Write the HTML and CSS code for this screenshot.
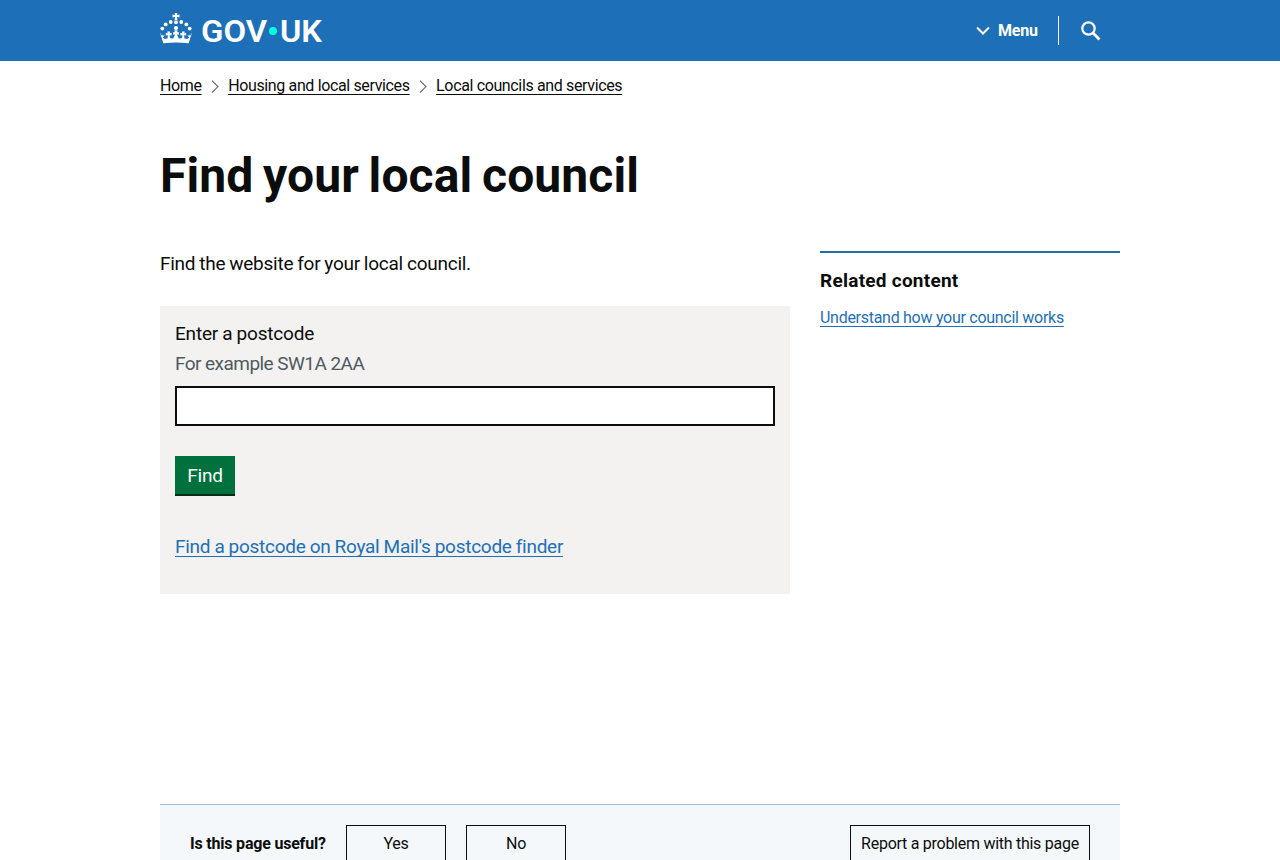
FILE: index.html
```html
<!DOCTYPE html>
<html lang="en">
<head>
    <meta charset="utf-8">
    <title>Find your local council - GOV.UK</title>
    <link rel="stylesheet" href="styles.css">
</head>
<body>
    <header class="header">
        <div class="container header-inner">
            <a class="logo" href="#" aria-label="GOV.UK">
                <svg width="170" height="44" viewBox="0 0 170 44">
                    <g fill="#fff">
                        <!-- crown -->
                        <path d="M14.700 1h2.600l-.4 2 2.600-.4v2.800l-2.600-.4.6 3.600h-3l.6-3.600-2.600.4V2.600l2.600.4z"/>
                        <circle cx="16" cy="10.300" r="1.900"/>
                        <circle cx="16" cy="16" r="2.100"/>
                        <circle cx="10.700" cy="10" r="1.900"/>
                        <circle cx="21.300" cy="10" r="1.900"/>
                        <circle cx="5.700" cy="12.400" r="1.900"/>
                        <circle cx="26.300" cy="12.400" r="1.900"/>
                        <circle cx="2.300" cy="16.600" r="1.900"/>
                        <circle cx="29.700" cy="16.600" r="1.900"/>
                        <path d="M3.300 31.300 0 20.500l1.600 2.800 3 .2-1.700 2L4.800 27l2.600-.6.6-3.200-2.200.4v-2.800l1.900.4-.4-1.800h2.800l-.5 1.800 2-.4v2.800l-2.200-.4.8 3 3 .2 1.900-4-1.900.3v-2.800l1.600.3-.4-2h3.200l-.4 2 1.600-.3v2.800l-1.900-.3 1.900 4 3-.2.8-3-2.200.4v-2.800l2 .4-.5-1.800h2.800l-.4 1.800 1.900-.4v2.800l-2.200-.4.6 3.200 2.600.6 1.900-1.500-1.700-2 3-.2L32 20.500l-3.300 10.800Q16 29.600 3.300 31.300z"/>
                    </g>
                    <text class="logo-text" x="41" y="30" textLength="66" lengthAdjust="spacingAndGlyphs">GOV</text>
                    <circle cx="113" cy="19" r="4" fill="#00ffe0"/>
                    <text class="logo-text" x="120" y="30" textLength="42" lengthAdjust="spacingAndGlyphs">UK</text>
                </svg>
            </a>
            <nav class="header-nav">
                <button class="menu-button" type="button">
                    <svg width="14" height="9" viewBox="0 0 14 9"><path d="M1 1.500l6 6 6-6" fill="none" stroke="#fff" stroke-width="2"/></svg>
                    <span>Menu</span>
                </button>
                <button class="search-button" type="button" aria-label="Search">
                    <svg width="20" height="20" viewBox="0 0 20 20" fill="none" stroke="#fff"><circle cx="7.500" cy="7.500" r="6.200" stroke-width="2.200"/><path d="M12 12l6.500 6.500" stroke-width="2.800"/></svg>
                </button>
            </nav>
        </div>
    </header>

    <div class="container">
        <ol class="breadcrumbs">
            <li><a href="#">Home</a></li>
            <li><a href="#">Housing and local services</a></li>
            <li><a href="#">Local councils and services</a></li>
        </ol>

        <h1 class="title">Find your local council</h1>

        <div class="columns">
            <main class="main">
                <p class="lead">Find the website for your local council.</p>
                <form class="postcode">
                    <label class="label" for="postcode">Enter a postcode</label>
                    <div class="hint">For example SW1A 2AA</div>
                    <input class="input" id="postcode" name="postcode" type="text">
                    <button class="find-button" type="button">Find</button>
                    <p class="finder"><a href="#">Find a postcode on Royal Mail's postcode finder</a></p>
                </form>
            </main>
            <aside class="related">
                <h2 class="related-title">Related content</h2>
                <a class="related-link" href="#">Understand how your council works</a>
            </aside>
        </div>

        <div class="feedback">
            <h2 class="feedback-title">Is this page useful?</h2>
            <button class="feedback-button" type="button">Yes</button>
            <button class="feedback-button" type="button">No</button>
            <button class="feedback-button report" type="button">Report a problem with this page</button>
        </div>
    </div>
</body>
</html>
```
FILE: styles.css
```css
* {
    box-sizing: border-box;
}
body {
    margin: 0;
    height: 860px;
    overflow: hidden;
    background: #fff;
    color: #0b0c0c;
    font-family: Roboto, "Liberation Sans", sans-serif;
    font-size: 19px;
    line-height: 25px;
}
button {
    font-family: inherit;
    padding: 0;
}
a {
    color: #1d70b8;
    text-decoration: underline;
    text-decoration-thickness: 1px;
    text-underline-offset: 3px;
    text-decoration-skip-ink: none;
}
.container {
    width: 960px;
    margin: 0 auto;
}
.header {
    height: 61px;
    background: #1d70b8;
}
.header-inner {
    display: flex;
    justify-content: space-between;
}
.logo {
    height: 44px;
    margin-top: 12px;
}
.logo svg {
    display: block;
}
.logo-text {
    fill: #fff;
    font-size: 31px;
    font-weight: 600;
}
.header-nav {
    display: flex;
    align-items: center;
    height: 29px;
    margin-top: 16px;
}
.menu-button {
    display: flex;
    align-items: center;
    gap: 8px;
    width: 83px;
    height: 29px;
    border: 0;
    border-right: 1px solid #fff;
    background: none;
    color: #fff;
    font-size: 16px;
    font-weight: 700;
    letter-spacing: -0.2px;
}
.search-button {
    display: flex;
    align-items: center;
    width: 61px;
    height: 29px;
    padding: 1px 0 0 22px;
    border: 0;
    background: none;
}
.breadcrumbs {
    display: flex;
    margin: 15px 0 0;
    padding: 0;
    list-style: none;
    font-size: 16px;
    line-height: 20px;
    letter-spacing: -0.36px;
}
.breadcrumbs li {
    display: flex;
    align-items: center;
}
.breadcrumbs li + li::before {
    content: "";
    width: 7.5px;
    height: 7.5px;
    margin: 0 12px 0 6px;
    border: solid #505a5f;
    border-width: 1px 1px 0 0;
    transform: rotate(45deg);
}
.breadcrumbs a {
    color: #0b0c0c;
}
.title {
    margin: 55px 0 0;
    font-size: 48px;
    line-height: 50px;
    font-weight: 700;
    letter-spacing: 0.1px;
    word-spacing: -2.3px;
}
.columns {
    display: flex;
    justify-content: space-between;
    height: 603px;
    padding-top: 50px;
}
.main {
    width: 630px;
}
.lead {
    margin: 0 0 30px;
    letter-spacing: -0.25px;
    word-spacing: -0.5px;
}
.postcode {
    height: 288px;
    padding: 15px;
    background: #f3f2f1;
}
.label {
    display: block;
    margin-bottom: 5px;
    letter-spacing: -0.2px;
    word-spacing: -0.3px;
}
.hint {
    margin-bottom: 10px;
    color: #505a5f;
    letter-spacing: -0.55px;
}
.input {
    display: block;
    width: 100%;
    height: 40px;
    border: 2px solid #0b0c0c;
    border-radius: 0;
    background: #fff;
}
.find-button {
    display: block;
    width: 60px;
    height: 40px;
    margin-top: 30px;
    border: 0;
    border-bottom: 2px solid #002d18;
    background: #00703c;
    color: #fff;
    font-size: 19px;
    letter-spacing: -0.25px;
}
.finder {
    margin: 38px 0 0;
    letter-spacing: -0.27px;
    word-spacing: -0.3px;
}
.related {
    width: 300px;
    height: 80px;
    border-top: 2px solid #23709f;
}
.related-title {
    margin: 15px 0 15px;
    font-size: 19px;
    line-height: 25px;
    letter-spacing: 0.25px;
}
.related-link {
    display: block;
    width: fit-content;
    font-size: 16px;
    line-height: 20px;
    letter-spacing: -0.28px;
}
.feedback {
    display: flex;
    height: 80px;
    padding: 20px 30px;
    border-top: 1px solid #9bbfdb;
    background: #f4f8fb;
}
.feedback-title {
    width: 156px;
    margin: 0;
    font-size: 16px;
    line-height: 38px;
    letter-spacing: -0.2px;
}
.feedback-button {
    width: 100px;
    height: 40px;
    margin-right: 20px;
    padding-bottom: 3px;
    border: 1px solid #0b0c0c;
    background: #f4f8fb;
    color: #0b0c0c;
    font-size: 16px;
    letter-spacing: -0.27px;
}
.feedback-button.report {
    width: 240px;
    margin: 0 0 0 auto;
}
```
